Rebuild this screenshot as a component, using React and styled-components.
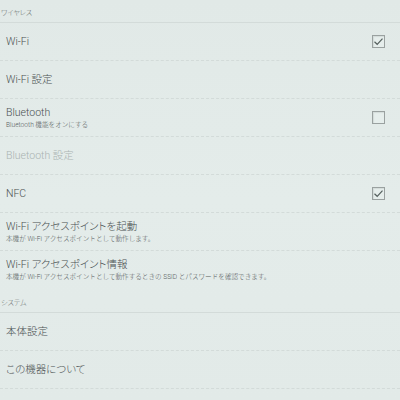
import React from "react";
import styled, { createGlobalStyle } from "styled-components";

const Global = createGlobalStyle`
  html, body { margin: 0; padding: 0; }
  body {
    width: 400px;
    height: 400px;
    overflow: hidden;
    background: #e3ebe9;
    font-family: Roboto, "Noto Sans CJK JP", sans-serif;
  }
`;

const Page = styled.div`
  width: 400px;
  height: 400px;
  background: linear-gradient(180deg, #e1e9e7 0%, #e4ecea 50%, #e2eae8 100%);
  display: flex;
  flex-direction: column;
`;

const Header = styled.div`
  height: ${(p) => p.$h}px;
  box-sizing: border-box;
  display: flex;
  align-items: flex-end;
  padding: 0 0 5px 1px;
  font-size: 7px;
  font-weight: 300;
  font-feature-settings: "palt";
  color: #6a7170;
  border-bottom: 1px solid #d3dbd9;
`;

const Row = styled.div`
  height: ${(p) => p.$h || 38}px;
  box-sizing: border-box;
  display: flex;
  align-items: center;
  justify-content: space-between;
  padding: 0 15px 0 6px;
  border-bottom: ${(p) => (p.$noLine ? "none" : "1px dashed #d3dbd9")};
`;

const Texts = styled.div`
  display: flex;
  flex-direction: column;
  gap: 2px;
`;

const Title = styled.div`
  font-size: 10.5px;
  line-height: 12px;
  font-weight: 300;
  font-feature-settings: "palt";
  color: ${(p) => (p.$disabled ? "#aab3b1" : "#4a5051")};
`;

const Sub = styled.div`
  font-size: 6.6px;
  line-height: 8px;
  font-weight: 300;
  color: #565c5d;
`;

const Box = styled.div`
  width: 13px;
  height: 13px;
  box-sizing: border-box;
  border: 1px solid #9aa1a0;
  background: #e6eeec;
  box-shadow: inset 1px 1px 1px rgba(0, 0, 0, 0.08);
  display: flex;
  align-items: center;
  justify-content: center;
`;

const Check = ({ on }) => (
  <Box>
    {on && (
      <svg width="11" height="11" viewBox="0 0 11 11">
        <path d="M1.5 5.8 L4.2 8.3 L9.5 2.6" fill="none" stroke="#55605e" strokeWidth="1.2" />
      </svg>
    )}
  </Box>
);

export default function App() {
  return (
    <Page>
      <Global />
      <Header $h={23}>ワイヤレス</Header>
      <Row>
        <Texts><Title>Wi-Fi</Title></Texts>
        <Check on />
      </Row>
      <Row>
        <Texts><Title>Wi-Fi 設定</Title></Texts>
      </Row>
      <Row>
        <Texts>
          <Title>Bluetooth</Title>
          <Sub>Bluetooth 機能をオンにする</Sub>
        </Texts>
        <Check />
      </Row>
      <Row>
        <Texts><Title $disabled>Bluetooth 設定</Title></Texts>
      </Row>
      <Row>
        <Texts><Title>NFC</Title></Texts>
        <Check on />
      </Row>
      <Row>
        <Texts>
          <Title>Wi-Fi アクセスポイントを起動</Title>
          <Sub>本機が Wi-Fi アクセスポイントとして動作します。</Sub>
        </Texts>
      </Row>
      <Row $noLine>
        <Texts>
          <Title>Wi-Fi アクセスポイント情報</Title>
          <Sub>本機が Wi-Fi アクセスポイントとして動作するときの SSID とパスワードを確認できます。</Sub>
        </Texts>
      </Row>
      <Header $h={24}>システム</Header>
      <Row>
        <Texts><Title>本体設定</Title></Texts>
      </Row>
      <Row>
        <Texts><Title>この機器について</Title></Texts>
      </Row>
    </Page>
  );
}
